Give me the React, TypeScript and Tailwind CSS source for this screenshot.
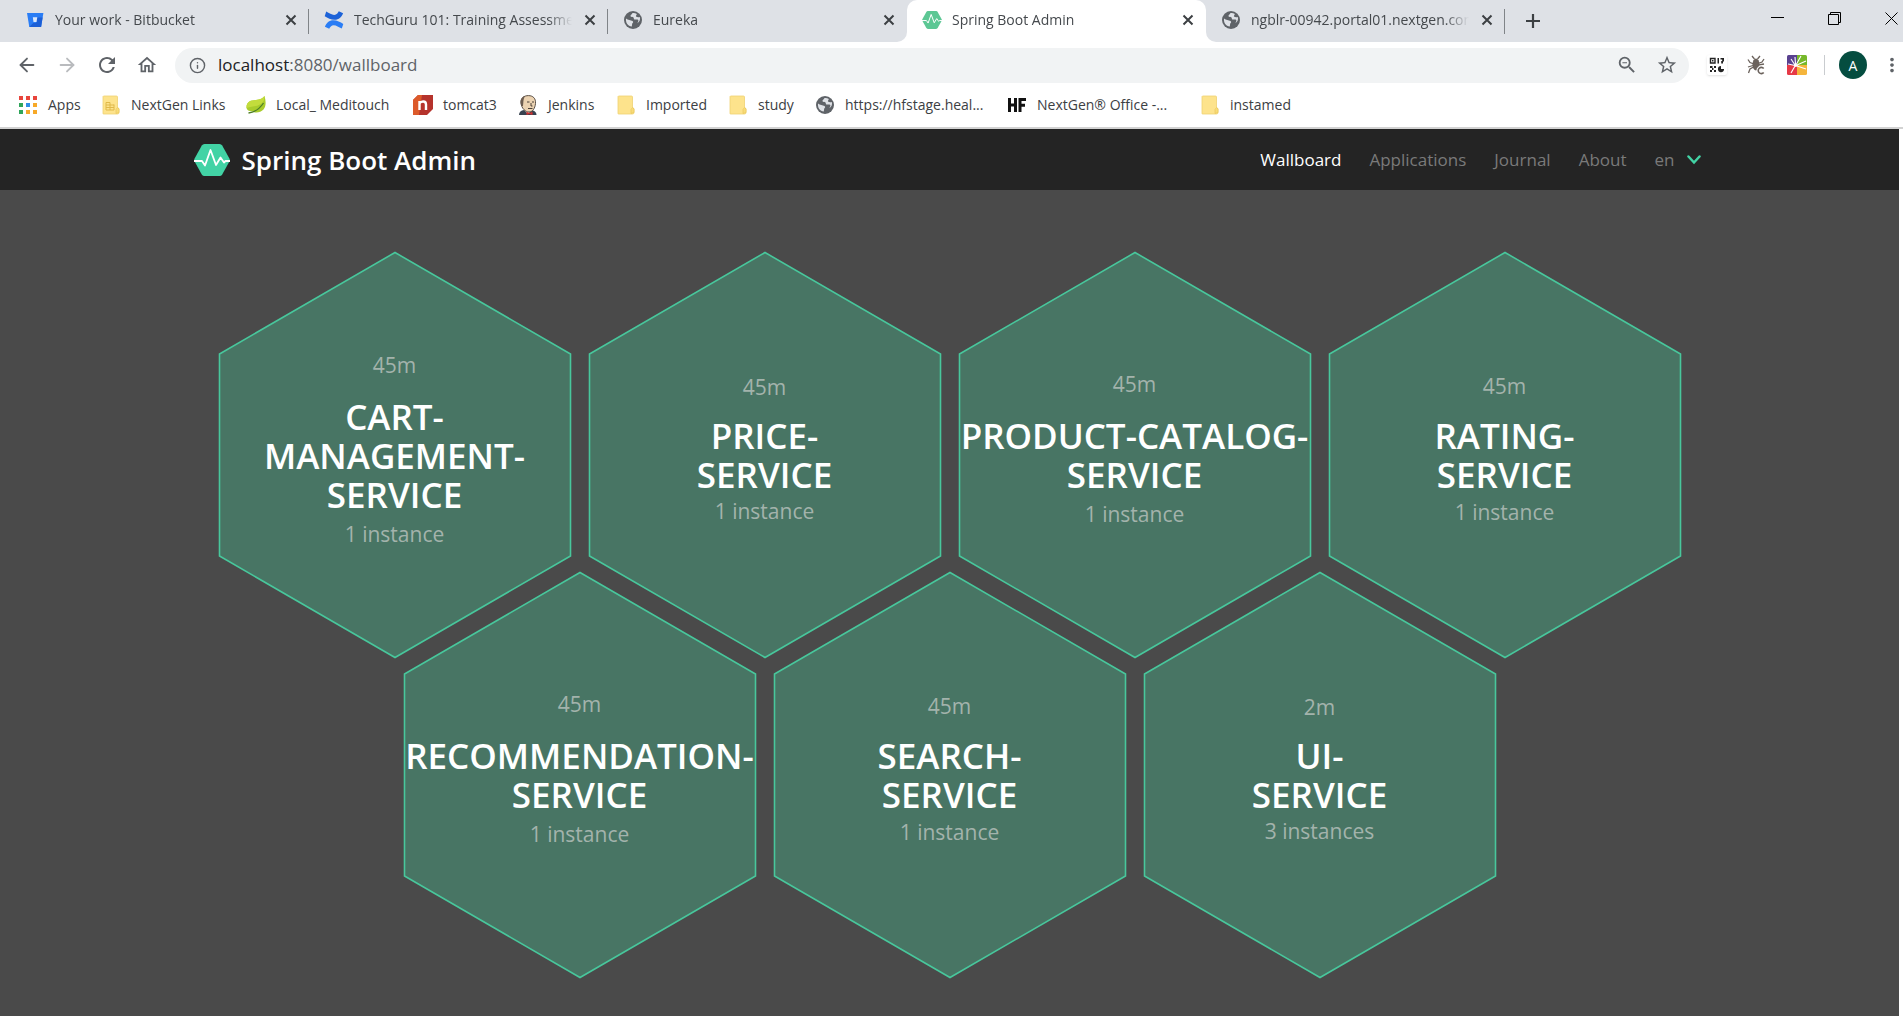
import React from "react";
import { ArrowLeft, ArrowRight, Info } from "lucide-react";
import { MdRefresh, MdOutlineHome, MdStarBorder, MdMoreVert, MdPublic, MdOutlineZoomOut } from "react-icons/md";

function Bitbucket() {
  return (
    <svg viewBox="0 0 18 18" className="size-[18px] shrink-0" aria-hidden="true">
      <path d="M1 2h16.400l-2.300 14H3.300z" fill="#2a7df5" />
      <path d="M11 6.500h5.600L15.100 16H3.300l3.900-4h3z" fill="#1c5fd6" />
      <path d="M6.800 6.300h4.500l-.8 4.700H7.500z" fill="#dbe8fc" />
    </svg>
  );
}

function Confluence() {
  return (
    <svg viewBox="0 0 20 20" className="size-5 shrink-0" aria-hidden="true">
      <path d="M2.200 1.500c3 1.500 5.500 3.400 8 3.400 2.600 0 3.600-1.800 4.600-3.600l4.300 2c-1.700 3.900-4 6.500-8.600 6.500C7 9.800 3.600 7.800.7 6.200z" fill="#1c62d8" />
      <path d="M17.800 18.600c-3-1.500-5.500-3.400-8-3.400-2.600 0-3.600 1.800-4.600 3.600l-4.300-2c1.700-3.900 4-6.500 8.600-6.500 3.500 0 6.900 2 9.800 3.600z" fill="#2a7df5" />
    </svg>
  );
}

function Pulse({ className, fill }: { className: string; fill: string }) {
  return (
    <svg viewBox="0 0 36 32" className={className} aria-hidden="true">
      <path d="M10.500 0h15q1.800 0 2.700 1.500l7.200 13q.8 1.500 0 3l-7.200 13Q27.300 32 25.500 32h-15q-1.800 0-2.700-1.500l-7.200-13q-.8-1.500 0-3l7.200-13Q8.700 0 10.500 0z" fill={fill} />
      <path d="M0 17h8l3 4.500L16.500 6l5.500 15 4.500-7.500L30 18.500l1.500-1.500H36" fill="none" stroke="#fff" strokeWidth="1.800" strokeLinejoin="round" />
    </svg>
  );
}

function Globe() {
  return (
    <svg viewBox="0 0 20 20" className="size-5 shrink-0" aria-hidden="true">
      <circle cx="10" cy="10" r="9" fill="#5f6368" />
      <path d="M3 8.500c2 1.700 4.500 1.500 6.500 2.500 1.300.8.500 2-.3 2.500l-.4 3C5 16 2.500 13 3 8.500zM9.500 3c-.5 1.500-2.500 2-2 3.300.4 1 2.200.3 3 1.200.6.800 0 1.600 1 2 1.500.3 2.500-.5 3.500.3.800.6.200 2.200-.8 3.400 2.500-1.200 3.300-4 2.600-6.200C14.500 7.500 12.500 7 13 5.800l.9-1.700C12.500 3 11 2.800 9.500 3z" fill="#dee1e6" />
    </svg>
  );
}

function Folder({ lined }: { lined?: boolean }) {
  return (
    <svg viewBox="0 0 18 20" className="h-5 w-[18px] shrink-0" aria-hidden="true">
      <path d="M1.500 1h13q1 0 1 1v10.500l1.500 1v4q0 1.500-1.500 1.500h-14Q1 19 1 18.500v-17z" fill="#fde38c" stroke="#efd272" strokeWidth=".8" />
      <path d="M14 18.500v-4l1.500-2 1.500 1.500v3.500z" fill="#f8dc78" stroke="#e8c558" strokeWidth=".6" />
      {lined && <path d="M4 15h8M4 12.500h8M4 10h8M4 7.500h4M12 15V9.500M8 15V7.500M4 15V7.500" stroke="#e0b94a" fill="none" />}
    </svg>
  );
}

function Leaf() {
  return (
    <svg viewBox="0 0 20 20" className="size-5 shrink-0" aria-hidden="true">
      <path d="M.5 13C.3 6 5 5.500 10 5c4-.4 7-1.500 8.500-4 1.500 5 1.800 10-1 13.500C14.500 18 9 18 6 16.500c-3-.3-5.300-1.500-5.500-3.500z" fill="#a9cc2c" />
      <path d="M.5 13C.3 6 5 5.500 10 5c4-.4 7-1.500 8.500-4 .5 6-4 9-9 10-4 .8-7 1-9 2z" fill="#c3dc3c" />
      <path d="M2.500 18c6-.8 11-4 15-10" fill="none" stroke="#4c7d2a" strokeWidth="1.300" />
    </svg>
  );
}

function NextGenN() {
  return (
    <svg viewBox="0 0 20 20" className="size-5 shrink-0" aria-hidden="true">
      <path d="M5 0h15v14l-6 6H0V5z" fill="#b5332c" />
      <path d="M5 0h4L6 20H0V5z" fill="#dc5a2a" />
      <path d="M6.500 15V6M6.500 8.500c1.500-2.500 6.500-3 6.500 1V15" fill="none" stroke="#fff" strokeWidth="2.400" />
    </svg>
  );
}

function JenkinsFace() {
  return (
    <svg viewBox="0 0 20 20" className="size-5 shrink-0" aria-hidden="true">
      <path d="M1 20c0-3 2-4.500 5-5h7c3 .5 5.500 2 5.500 5z" fill="#374250" />
      <path d="M6 15l4 4 4-4z" fill="#f4f1ec" />
      <path d="M3 8C2.500 3 6 .6 10.500.6S18 3.500 17.500 8.500 14.500 17 11 17 3.500 13.500 3 8z" fill="#ecd3b2" stroke="#4a4038" strokeWidth=".9" />
      <path d="M3.500 11C1.500 6.500 3 2 7 1 5 4 5.500 8 5 11z" fill="#6d5d50" />
      <path d="M9 7h2.500M14 7h2M13 8v3h1.500M10 13.500h4.500" stroke="#4a4038" fill="none" />
      <path d="M8.500 16.800l3 1.200 3-1.200V20l-3-1-3 1z" fill="#d03030" />
    </svg>
  );
}

function HfMark() {
  return (
    <svg viewBox="0 0 20 20" className="size-5 shrink-0" aria-hidden="true">
      <path d="M2.500 3v14M8.500 3v14M2.500 10h6M13 3v14M13 4.500h6M13 10.200h5" fill="none" stroke="#111" strokeWidth="3" />
    </svg>
  );
}

function AppsGrid() {
  const colors = ["#e8453c", "#e8453c", "#e8453c", "#2fa55a", "#2f8fe8", "#f7a928", "#2fa55a", "#f7a928", "#f7a928"];
  return (
    <span className="grid size-[18px] shrink-0 grid-cols-3 gap-[3px]" aria-hidden="true">
      {colors.map((c, i) => (
        <span key={i} className="size-1" style={{ backgroundColor: c }} />
      ))}
    </span>
  );
}

function Cross() {
  return (
    <svg viewBox="0 0 12 12" className="size-3" aria-hidden="true">
      <path d="M1.500 1.500l9 9M10.500 1.500l-9 9" stroke="#3c4043" strokeWidth="2" />
    </svg>
  );
}

type TabInfo = { title: string; icon: React.ReactNode; active?: boolean; divider?: boolean };

const tabs: TabInfo[] = [
  { title: "Your work - Bitbucket", icon: <Bitbucket />, divider: true },
  { title: "TechGuru 101: Training Assessment", icon: <Confluence />, divider: true },
  { title: "Eureka", icon: <Globe /> },
  { title: "Spring Boot Admin", icon: <Pulse className="h-[18px] w-5 shrink-0" fill="#5cc794" />, active: true },
  { title: "ngblr-00942.portal01.nextgen.com", icon: <Globe />, divider: true },
];

function TabStrip() {
  return (
    <div className="flex h-[42px] items-stretch bg-[#dee1e6] pl-2.5">
      <div role="tablist" className="flex min-w-0">
        {tabs.map((t) => (
          <div
            key={t.title}
            className={
              t.active
                ? "relative flex w-[299px] min-w-0 items-center rounded-t-[10px] bg-white pr-2 pb-0.5 pl-[15px]"
                : "relative flex w-[299px] min-w-0 items-center pr-2 pb-0.5 pl-[15px]"
            }
          >
            {t.active && (
              <>
                <span className="absolute bottom-0 -left-2.5 size-2.5 bg-white">
                  <span className="block size-full rounded-br-[10px] bg-[#dee1e6]" />
                </span>
                <span className="absolute -right-2.5 bottom-0 size-2.5 bg-white">
                  <span className="block size-full rounded-bl-[10px] bg-[#dee1e6]" />
                </span>
              </>
            )}
            <button role="tab" aria-selected={!!t.active} className="flex min-w-0 flex-1 items-center gap-2.5 text-left">
              <span className="flex w-5 shrink-0 justify-center">{t.icon}</span>
              <span className="min-w-0 flex-1 overflow-hidden whitespace-nowrap text-[14px] leading-5 text-[#45494d] [mask-image:linear-gradient(to_right,#000_calc(100%-24px),transparent)]">
                {t.title}
              </span>
            </button>
            <button aria-label="Close tab" className="ml-2 flex size-5 shrink-0 items-center justify-center">
              <Cross />
            </button>
            {t.divider && <span className="absolute top-[9px] right-0 h-[25px] w-px bg-[#808488]" />}
          </div>
        ))}
      </div>
      <button aria-label="New tab" className="ml-[18px] flex w-5 shrink-0 items-center justify-center">
        <svg viewBox="0 0 16 16" className="size-4" aria-hidden="true">
          <path d="M8 1v14M1 8h14" stroke="#3c4043" strokeWidth="2.200" />
        </svg>
      </button>
      <div className="ml-auto flex items-start gap-11 pt-3 pr-[5px] text-black">
        <button aria-label="Minimize">
          <svg viewBox="0 0 13 13" className="size-[13px]" aria-hidden="true"><path d="M0 5.500h13" stroke="currentColor" /></svg>
        </button>
        <button aria-label="Restore">
          <svg viewBox="0 0 13 13" className="size-[13px]" aria-hidden="true"><path d="M.5 2.500h10v10H.5zM2.500 2.500v-2h10v10h-2" fill="none" stroke="currentColor" /></svg>
        </button>
        <button aria-label="Close window">
          <svg viewBox="0 0 13 13" className="size-[13px]" aria-hidden="true"><path d="M.5.5l12 12M12.500.5l-12 12" stroke="currentColor" /></svg>
        </button>
      </div>
    </div>
  );
}

function QrIcon() {
  return (
    <svg viewBox="0 0 20 20" className="size-5 rounded-xs shadow-sm" aria-hidden="true">
      <path d="M3.500 3.500h4.500v4.500H3.500z" fill="none" stroke="#222" strokeWidth="1.400" />
      <path d="M5 5h1.500v1.500H5zM10.500 3h1.500v5.500h-1.500zM13.500 3h3.500v3.500h-1v2h-1.800V6h1V4.500h-1.700zM3 11h2.500v2H3zM7 11h2v2H7zM5 13h1.500v2H5zM3 15h2v2H3zM7 15h2v2H7z" fill="#222" />
      <path d="M14 11a3.100 3.100 0 1 0 3.100 3.100H14z" fill="#222" />
    </svg>
  );
}

function BugIcon() {
  return (
    <svg viewBox="0 0 20 20" className="size-5" aria-hidden="true">
      <ellipse cx="9" cy="9.500" rx="3.500" ry="6" fill="#6b625c" />
      <path d="M5 1l2.500 3M13 1l-2.500 3M1 4.500L3 7.500l4 1.500M17 4l-2 3-4 1.500M1 12l5-1.500M1.500 18l1.500-4L6.500 12M12 10l5-1" fill="none" stroke="#6b625c" strokeWidth="1.300" />
      <path d="M16.700 13.500a3.100 3.100 0 1 0 0 4" fill="none" stroke="#fff" strokeWidth="3.600" />
      <path d="M16.700 13.500a3.100 3.100 0 1 0 0 4" fill="none" stroke="#6b625c" strokeWidth="1.600" />
    </svg>
  );
}

function ColorIcon() {
  return (
    <svg viewBox="0 0 20 20" className="size-5" aria-hidden="true">
      <path d="M1.500 0H10v10H0V1.500Q0 0 1.500 0z" fill="#59418f" />
      <path d="M10 0h8.500Q20 0 20 1.500V10H10z" fill="#76b82a" />
      <path d="M0 10h10v10H1.500Q0 20 0 18.500z" fill="#e63946" />
      <path d="M10 10h10v8.500q0 1.500-1.500 1.500H10z" fill="#f5b53c" />
      <path d="M8 10L4 4M8.500 9L8 2M9.500 9L14 1M10 10l9-4M10 11l9 3M8 11l-4 7M8 10.500L1 9" stroke="#fff" strokeWidth="1.100" />
      <circle cx="8.800" cy="10.300" r="1.600" fill="#fff" />
    </svg>
  );
}

function Toolbar() {
  return (
    <div className="flex h-[46px] items-center bg-white pl-[15px] text-[#5f6368]">
      <div className="flex items-center gap-4">
        <button aria-label="Back" className="flex size-6 items-center justify-center"><ArrowLeft className="size-[22px]" /></button>
        <button aria-label="Forward" className="flex size-6 items-center justify-center text-[#b9bbbe]"><ArrowRight className="size-[22px]" /></button>
        <button aria-label="Reload" className="flex size-6 items-center justify-center"><MdRefresh className="size-6" /></button>
        <button aria-label="Home" className="flex size-6 items-center justify-center"><MdOutlineHome className="size-[22px]" /></button>
      </div>
      <div className="ml-4 flex h-[35px] flex-1 items-center rounded-full bg-[#f1f3f4] pr-[11px] pl-3.5">
        <Info className="size-[17px] shrink-0" aria-hidden="true" />
        <a href="http://localhost:8080/wallboard" aria-label="Address" className="ml-3 flex-1 text-[17px] leading-6">
          <span className="text-[#202124]">localhost</span>:8080/wallboard
        </a>
        <button aria-label="Zoom" className="mr-[18px]"><MdOutlineZoomOut className="size-[22px]" /></button>
        <button aria-label="Bookmark this tab"><MdStarBorder className="size-[22px]" /></button>
      </div>
      <div className="ml-[18px] flex items-center gap-5">
        <button aria-label="QR code"><QrIcon /></button>
        <button aria-label="Bug extension"><BugIcon /></button>
        <button aria-label="Color extension"><ColorIcon /></button>
      </div>
      <span className="ml-[17px] h-5 w-px bg-[#c9cccf]" />
      <button aria-label="Profile" className="ml-3.5 flex size-7 items-center justify-center rounded-full bg-[#054d40] text-[14px] text-white">A</button>
      <button aria-label="Menu" className="ml-3.5"><MdMoreVert className="size-[22px]" /></button>
    </div>
  );
}

const bookmarks = [
  { label: "Apps", icon: <AppsGrid />, box: "w-[83px]" },
  { label: "NextGen Links", icon: <Folder lined />, box: "w-[145px]" },
  { label: "Local_ Meditouch", icon: <Leaf />, box: "w-[167px]" },
  { label: "tomcat3", icon: <NextGenN />, box: "w-[105px]" },
  { label: "Jenkins", icon: <JenkinsFace />, box: "w-[98px]" },
  { label: "Imported", icon: <Folder />, box: "w-[112px]" },
  { label: "study", icon: <Folder />, box: "w-[87px]" },
  { label: "https://hfstage.heal...", icon: <Globe />, box: "w-[192px]" },
  { label: "NextGen® Office -...", icon: <HfMark />, box: "w-[193px]" },
  { label: "instamed", icon: <Folder />, box: "w-[110px]" },
];

function Bookmarks() {
  return (
    <nav aria-label="Bookmarks" className="flex h-[41px] items-center border-b-2 border-[#d2d2d2] bg-white pb-[5px] pl-[18px]">
      {bookmarks.map((b) => (
        <a key={b.label} href="#" className={`${b.box} flex shrink-0 items-center gap-2.5 whitespace-nowrap text-[14px] leading-5 text-[#3c4043]`}>
          <span className="flex w-5 shrink-0 justify-center">{b.icon}</span>
          {b.label}
        </a>
      ))}
    </nav>
  );
}

function Navbar() {
  return (
    <header className="h-[61px] bg-[#242424]">
      <div className="mx-auto flex h-full max-w-[1512px] items-center justify-between pr-[5px]">
        <a href="#" className="flex items-center gap-3 text-[26px] leading-8 font-semibold text-white">
          <Pulse className="h-8 w-9" fill="#42d3a5" />
          Spring Boot Admin
        </a>
        <nav aria-label="Main" className="flex items-center gap-7 text-[17px] leading-6 text-[#7a7a7a]">
          <a href="#" aria-current="page" className="text-white">Wallboard</a>
          <a href="#">Applications</a>
          <a href="#">Journal</a>
          <a href="#">About</a>
          <button className="flex items-center gap-3">
            en
            <svg viewBox="0 0 14 10" className="h-2.5 w-3.5" aria-hidden="true">
              <path d="M1.500 1.500L7 7.500l5.500-6" fill="none" stroke="#42d3a5" strokeWidth="2.500" strokeLinecap="round" />
            </svg>
          </button>
        </nav>
      </div>
    </header>
  );
}

type Service = { age: string; name: string[]; count: string; pad: string };

const rows: Service[][] = [
  [
    { age: "45m", name: ["CART-", "MANAGEMENT-", "SERVICE"], count: "1 instance", pad: "py-1" },
    { age: "45m", name: ["PRICE-", "SERVICE"], count: "1 instance", pad: "py-px" },
    { age: "45m", name: ["PRODUCT-CATALOG-", "SERVICE"], count: "1 instance", pad: "py-1" },
    { age: "45m", name: ["RATING-", "SERVICE"], count: "1 instance", pad: "py-0.5" },
  ],
  [
    { age: "45m", name: ["RECOMMENDATION-", "SERVICE"], count: "1 instance", pad: "py-1" },
    { age: "45m", name: ["SEARCH-", "SERVICE"], count: "1 instance", pad: "py-0.5" },
    { age: "2m", name: ["UI-", "SERVICE"], count: "3 instances", pad: "py-px" },
  ],
];

function Hexagon({ s }: { s: Service }) {
  return (
    <a href="#" className="grid aspect-[352/406] w-[calc((100%-54px)/4)] min-w-0 shrink-0 grid-cols-[minmax(0,1fr)] grid-rows-[minmax(0,1fr)]">
      <svg viewBox="0 0 352 406" className="col-start-1 row-start-1 size-full overflow-visible" aria-hidden="true">
        <path d="M176 .5L351.500 102V304L176 405.500L.5 304V102z" fill="#487564" stroke="#48c79c" strokeWidth="1.600" />
      </svg>
      <span className="col-start-1 row-start-1 grid grid-cols-[minmax(0,1fr)] grid-rows-[1fr_auto_1fr] text-center whitespace-nowrap">
        <span className="self-end pb-3 text-[21px] leading-8 text-[#a3b3ac]">{s.age}</span>
        <span className={`${s.pad} text-[35px] leading-[39px] font-semibold text-white`}>
          {s.name.map((line) => (
            <span key={line} className="block">{line}</span>
          ))}
        </span>
        <span className="text-[21px] leading-8 text-[#a3b3ac]">{s.count}</span>
      </span>
    </a>
  );
}

export default function App() {
  return (
    <div className="flex min-h-screen flex-col bg-white font-['Open_Sans','Noto_Sans',sans-serif]">
      <TabStrip />
      <Toolbar />
      <Bookmarks />
      <div className="mr-1 flex flex-1 flex-col bg-[#4a4a4a]">
        <Navbar />
        <main className="mx-auto w-full max-w-[1462px] flex-1 pt-[62px]">
          {rows.map((row, i) => (
            <div key={i} className={i ? "-mt-[86px] flex justify-center gap-[18px]" : "flex justify-center gap-[18px]"}>
              {row.map((s) => (
                <Hexagon key={s.name.join("")} s={s} />
              ))}
            </div>
          ))}
        </main>
      </div>
    </div>
  );
}
